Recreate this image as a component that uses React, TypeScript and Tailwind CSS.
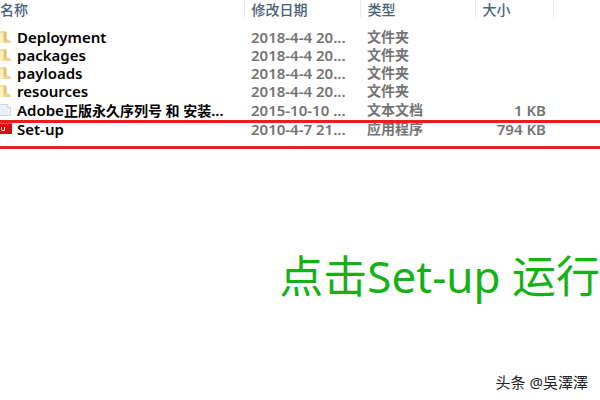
import React from "react";

type FileKind = "folder" | "text" | "app";

type FileItem = {
  name: React.ReactNode;
  date: string;
  type: string;
  size: string;
  kind: FileKind;
};

const files: FileItem[] = [
  { name: "Deployment", date: "2018-4-4 20...", type: "文件夹", size: "", kind: "folder" },
  { name: "packages", date: "2018-4-4 20...", type: "文件夹", size: "", kind: "folder" },
  { name: "payloads", date: "2018-4-4 20...", type: "文件夹", size: "", kind: "folder" },
  { name: "resources", date: "2018-4-4 20...", type: "文件夹", size: "", kind: "folder" },
  {
    name: <>Adobe<span className="text-sm leading-4">正版永久序列号 和 安装</span>...</>,
    date: "2015-10-10 ...",
    type: "文本文档",
    size: "1 KB",
    kind: "text",
  },
  { name: "Set-up", date: "2010-4-7 21...", type: "应用程序", size: "794 KB", kind: "app" },
];

const FileIcon = ({ kind }: { kind: FileKind }) => {
  if (kind === "folder") {
    return (
      <svg viewBox="0 0 12 16" className="h-4 w-3 shrink-0" aria-hidden="true">
        <path d="M0 2h4l2 1v11H0z" fill="#f3df98" />
        <path d="M0 4l3 1v9.500l-3-1z" fill="#faf0c4" />
        <path d="M4 2l2.500 1v8L4 13z" fill="#dfc26c" />
        <path d="M5 11.500L7 10l4 2.500V14H4z" fill="#ecd58c" />
      </svg>
    );
  }
  if (kind === "text") {
    return (
      <svg viewBox="0 0 12 16" className="h-4 w-3 shrink-0" aria-hidden="true">
        <path d="M0 2.500h7.500l3 3v8H0" fill="#edf3f9" stroke="#ccd5df" />
        <path d="M7.500 2.500v3h3" fill="#fff" stroke="#ccd5df" />
        <path d="M1 7.500h7M1 9.500h7M1 11.500h7" stroke="#e2ebf3" />
      </svg>
    );
  }
  return (
    <svg viewBox="0 0 12 16" className="h-4 w-3 shrink-0" aria-hidden="true">
      <path d="M0 2h12v11H0z" fill="#d80f12" />
      <path d="M0 2h12v1H0z" fill="#ee5a50" />
      <path d="M1.500 6v2.500q0 1 1 1h1.500M4.500 6v3.500" fill="none" stroke="#fff" />
    </svg>
  );
};

const FileTable = () => {
  return (
    <div className="relative overflow-x-clip">
      <table className="w-full table-fixed border-collapse whitespace-nowrap text-left text-[15px] leading-[18px]">
        <colgroup>
          <col className="w-[244px]" />
          <col className="w-[116px]" />
          <col className="w-[115px]" />
          <col className="w-[78px]" />
          <col />
        </colgroup>
        <thead>
          <tr className="text-sm leading-4 text-[#4c607a]">
            <th className="border-r border-[#e4edf5] p-0 pt-0.5 font-medium">名称</th>
            <th className="border-r border-[#e4edf5] p-0 pt-0.5 pl-[7px] font-medium">修改日期</th>
            <th className="border-r border-[#e4edf5] p-0 pt-0.5 pl-[7px] font-medium">类型</th>
            <th className="border-r border-[#e4edf5] p-0 pt-0.5 pl-[7px] font-medium">大小</th>
            <td className="p-0"></td>
          </tr>
        </thead>
        <tbody className="font-semibold text-[#737373] before:block before:h-[10px]">
          {files.map((file, i) => (
            <tr key={i} className={file.kind === "folder" ? "h-[18px]" : "h-[19px]"}>
              <td className="p-0 text-black">
                <div className="flex h-[18px] items-center gap-[5px]">
                  <FileIcon kind={file.kind} />
                  <span>{file.name}</span>
                </div>
              </td>
              <td className="p-0 pl-[7px]">{file.date}</td>
              <td className="p-0 pl-[7px] text-sm leading-4">{file.type}</td>
              <td className="p-0 pr-[7px] text-right">{file.size}</td>
              <td className="p-0"></td>
            </tr>
          ))}
        </tbody>
      </table>
      {/* red frame around the Set-up row */}
      <div className="pointer-events-none absolute inset-x-0 -bottom-[11px] h-[29px] border-y-[3px] border-[#e3231b]" />
    </div>
  );
};

const App = () => {
  return (
    <main className="flex min-h-screen flex-col bg-white font-['Noto_Sans','Noto_Sans_CJK_SC',sans-serif]">
      <FileTable />
      <p className="mt-[108px] whitespace-nowrap text-right text-[44px] leading-[60px] text-[#16b116]">
        点击Set-up 运行
      </p>
      <footer className="mt-auto px-3 pb-2 text-right text-[15px] leading-5 text-[#222]">
        头条 @吳澤澤
      </footer>
    </main>
  );
};

export default App;
